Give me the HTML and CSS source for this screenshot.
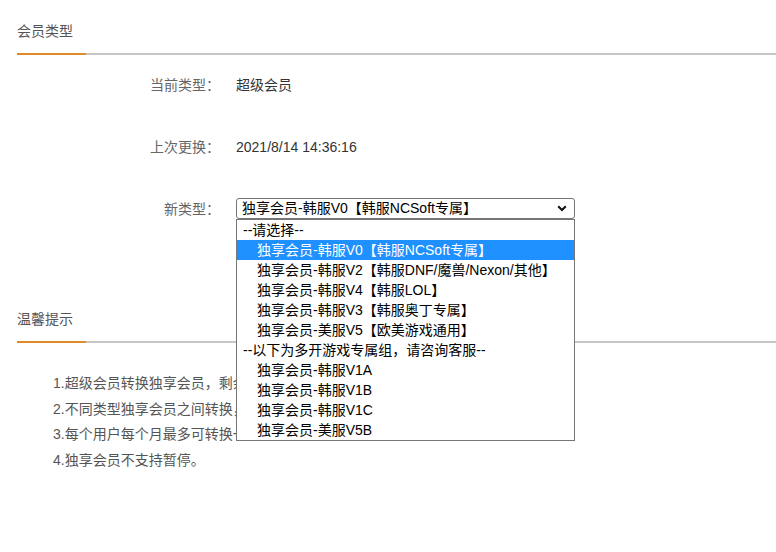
FILE: index.html
```html
<!DOCTYPE html>
<html lang="zh-CN">
<head>
<meta charset="utf-8">
<title>会员类型</title>
<link rel="stylesheet" href="styles.css">
</head>
<body>
<section class="section">
  <div class="section-head"><span class="section-tab">会员类型</span></div>
  <div class="form">
    <div class="form-label">当前类型：</div>
    <div class="form-value">超级会员</div>
    <div class="form-label">上次更换：</div>
    <div class="form-value">2021/8/14 14:36:16</div>
    <div class="form-label">新类型：</div>
    <div class="form-value select-wrap">
      <div class="select">
        <span class="select-text">独享会员-韩服V0【韩服NCSoft专属】</span>
        <svg class="select-arrow" width="10" height="7" viewBox="0 0 10 7"><path d="M1.2 1.2 L5 5 L8.8 1.2" fill="none" stroke="#111" stroke-width="2"/></svg>
      </div>
      <ul class="dropdown">
        <li class="opt group">--请选择--</li>
        <li class="opt selected">独享会员-韩服V0【韩服NCSoft专属】</li>
        <li class="opt">独享会员-韩服V2【韩服DNF/魔兽/Nexon/其他】</li>
        <li class="opt">独享会员-韩服V4【韩服LOL】</li>
        <li class="opt">独享会员-韩服V3【韩服奥丁专属】</li>
        <li class="opt">独享会员-美服V5【欧美游戏通用】</li>
        <li class="opt group">--以下为多开游戏专属组，请咨询客服--</li>
        <li class="opt">独享会员-韩服V1A</li>
        <li class="opt">独享会员-韩服V1B</li>
        <li class="opt">独享会员-韩服V1C</li>
        <li class="opt">独享会员-美服V5B</li>
      </ul>
    </div>
  </div>
</section>
<section class="section tips-section">
  <div class="section-head"><span class="section-tab">温馨提示</span></div>
  <ol class="tips">
    <li>1.超级会员转换独享会员，剩余时间按价格比例折算。</li>
    <li>2.不同类型独享会员之间转换，剩余时间不变。</li>
    <li>3.每个用户每个月最多可转换一次。</li>
    <li>4.独享会员不支持暂停。</li>
  </ol>
</section>
</body>
</html>
```

FILE: styles.css
```css
html, body {
  margin: 0;
  padding: 0;
  background: #fff;
}
body {
  font-family: "Liberation Sans", "Noto Sans CJK SC", sans-serif;
  font-size: 14px;
  color: #333;
}
.section-head {
  margin-left: 17px;
  padding-top: 21px;
  border-bottom: 2px solid #c6c6c6;
  display: flex;
}
.section-tab {
  display: block;
  width: 69px;
  line-height: 20px;
  padding-bottom: 12px;
  margin-bottom: -2px;
  border-bottom: 2px solid #df8b2a;
  color: #555;
}
.form {
  display: grid;
  grid-template-columns: 220px 339px;
  column-gap: 16px;
  row-gap: 41.5px;
  margin-top: 20px;
  align-items: center;
}
.form-label {
  text-align: right;
  line-height: 20px;
  color: #666;
}
.form-value {
  line-height: 20px;
  color: #333;
}
.select-wrap {
  position: relative;
}
.select {
  box-sizing: border-box;
  height: 21px;
  border: 1px solid #767676;
  border-radius: 3px;
  display: flex;
  align-items: center;
  justify-content: space-between;
  padding: 0 7px 0 5px;
  color: #000;
  line-height: 19px;
}
.select-arrow {
  display: block;
}
.dropdown {
  position: absolute;
  left: 0;
  top: 21px;
  width: 339px;
  box-sizing: border-box;
  margin: 0;
  padding: 0;
  list-style: none;
  background: #fff;
  border: 1px solid #767676;
  z-index: 10;
}
.opt {
  height: 20px;
  line-height: 20px;
  padding-left: 20px;
  color: #000;
  white-space: nowrap;
}
.opt.group {
  padding-left: 6px;
}
.opt.selected {
  background: #1e90ff;
  color: #fff;
}
.tips-section {
  margin-top: 69px;
}
.tips {
  list-style: none;
  margin: 28px 0 0;
  padding: 0 0 0 53px;
  color: #555;
}
.tips li {
  line-height: 25.5px;
}
```
